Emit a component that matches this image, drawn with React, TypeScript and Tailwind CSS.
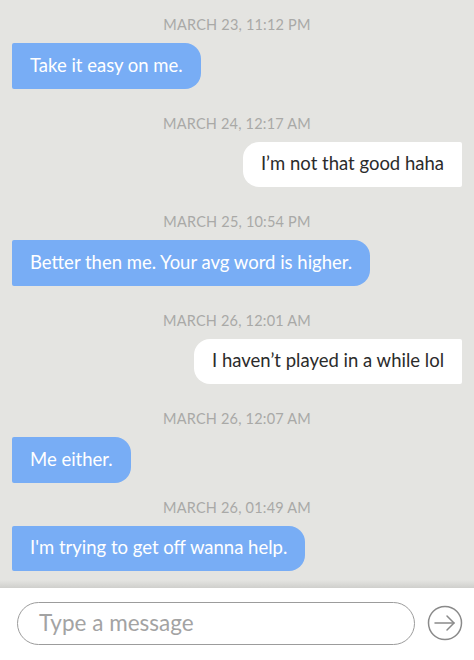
import React from "react";

type Msg = { time: string; text: string; mine: boolean; gap: string };

const messages: Msg[] = [
  { time: "MARCH 23, 11:12 PM", text: "Take it easy on me.", mine: false, gap: "mt-0" },
  { time: "MARCH 24, 12:17 AM", text: "I’m not that good haha", mine: true, gap: "mt-[25px]" },
  { time: "MARCH 25, 10:54 PM", text: "Better then me. Your avg word is higher.", mine: false, gap: "mt-[25px]" },
  { time: "MARCH 26, 12:01 AM", text: "I haven’t played in a while lol", mine: true, gap: "mt-[25px]" },
  { time: "MARCH 26, 12:07 AM", text: "Me either.", mine: false, gap: "mt-[25px]" },
  { time: "MARCH 26, 01:49 AM", text: "I'm trying to get off wanna help.", mine: false, gap: "mt-[15px]" },
];

function SendIcon() {
  return (
    <svg width="36" height="36" viewBox="0 0 36 36" fill="none" stroke="#8a8a8a" strokeWidth="1.5" strokeLinecap="round" strokeLinejoin="round">
      <circle cx="18" cy="18" r="16.5" />
      <path d="M8 18h19" />
      <path d="M20 11l7 7-7 7" />
    </svg>
  );
}

export default function App() {
  return (
    <div className="flex h-[660px] w-[474px] flex-col bg-white font-['Lato',sans-serif]">
      {/* conversation */}
      <div className="relative h-[588px] bg-[#e4e4e1] pt-[15px]">
        {messages.map((m, i) => (
          <div key={i} className={m.gap}>
            <div className="h-[20px] text-center text-[14.5px] leading-[20px] tracking-[0.2px] text-[#a9a9a7]">
              {m.time}
            </div>
            <div className={`mt-[8px] flex ${m.mine ? "justify-end pr-[12px]" : "justify-start pl-[12px]"}`}>
              <div
                className={
                  m.mine
                    ? "flex h-[45.5px] items-center rounded-l-[16px] rounded-r-[2px] bg-white px-[18px] text-[18.5px] text-[#2b2b2b]"
                    : "flex h-[45.5px] items-center rounded-r-[16px] rounded-l-[2px] bg-[#78adf5] px-[18px] text-[18.5px] text-white"
                }
              >
                {m.text}
              </div>
            </div>
          </div>
        ))}
        <div className="absolute bottom-0 left-0 right-0 h-[8px] bg-gradient-to-b from-[#e4e4e1] to-[#cfcfcc]" />
      </div>

      {/* composer */}
      <div className="flex flex-1 items-center gap-[12px] pb-[2px] pl-[17px] pr-[11px]">
        <div className="flex h-[43px] flex-1 items-center rounded-full border border-[#9c9c9c] pl-[21px] text-[22.5px] text-[#a3a3a3]">
          Type a message
        </div>
        <SendIcon />
      </div>
    </div>
  );
}
